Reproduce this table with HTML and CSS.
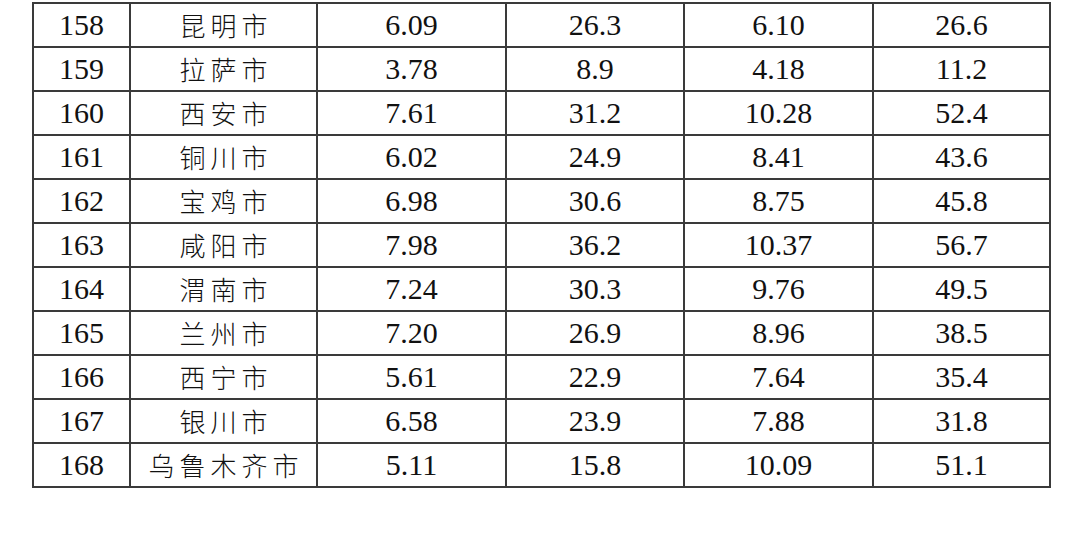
FILE: index.html
```html
<!DOCTYPE html>
<html>
<head>
<meta charset="utf-8">
<link rel="stylesheet" href="styles.css">
</head>
<body>
<table class="data">
<colgroup>
<col class="c1"><col class="c2"><col class="c3"><col class="c4"><col class="c5"><col class="c6">
</colgroup>
<tbody>
<tr><td>158</td><td class="city">昆明市</td><td>6.09</td><td>26.3</td><td>6.10</td><td>26.6</td></tr>
<tr><td>159</td><td class="city">拉萨市</td><td>3.78</td><td>8.9</td><td>4.18</td><td>11.2</td></tr>
<tr><td>160</td><td class="city">西安市</td><td>7.61</td><td>31.2</td><td>10.28</td><td>52.4</td></tr>
<tr><td>161</td><td class="city">铜川市</td><td>6.02</td><td>24.9</td><td>8.41</td><td>43.6</td></tr>
<tr><td>162</td><td class="city">宝鸡市</td><td>6.98</td><td>30.6</td><td>8.75</td><td>45.8</td></tr>
<tr><td>163</td><td class="city">咸阳市</td><td>7.98</td><td>36.2</td><td>10.37</td><td>56.7</td></tr>
<tr><td>164</td><td class="city">渭南市</td><td>7.24</td><td>30.3</td><td>9.76</td><td>49.5</td></tr>
<tr><td>165</td><td class="city">兰州市</td><td>7.20</td><td>26.9</td><td>8.96</td><td>38.5</td></tr>
<tr><td>166</td><td class="city">西宁市</td><td>5.61</td><td>22.9</td><td>7.64</td><td>35.4</td></tr>
<tr><td>167</td><td class="city">银川市</td><td>6.58</td><td>23.9</td><td>7.88</td><td>31.8</td></tr>
<tr><td>168</td><td class="city">乌鲁木齐市</td><td>5.11</td><td>15.8</td><td>10.09</td><td>51.1</td></tr>
</tbody>
</table>
</body>
</html>
```
FILE: styles.css
```css
html, body {
  margin: 0;
  padding: 0;
  background: #ffffff;
}
body {
  padding-top: 2px;
  padding-left: 32px;
}
.data {
  border-collapse: collapse;
  table-layout: fixed;
  width: 1018px;
  font-family: "Liberation Serif", "Times New Roman", serif;
  font-size: 30px;
  color: #111111;
}
.c1 { width: 97px; }
.c2 { width: 187px; }
.c3 { width: 189px; }
.c4 { width: 178px; }
.c5 { width: 189px; }
.c6 { width: 177px; }
.data td {
  border: 2px solid #3a3a3a;
  height: 42px;
  padding: 0;
  text-align: center;
  vertical-align: middle;
  line-height: 42px;
}
.data td.city {
  font-family: "Noto Sans CJK SC", sans-serif;
  font-size: 26px;
  font-weight: 300;
  letter-spacing: 5px;
  padding-left: 5px;
}
```
